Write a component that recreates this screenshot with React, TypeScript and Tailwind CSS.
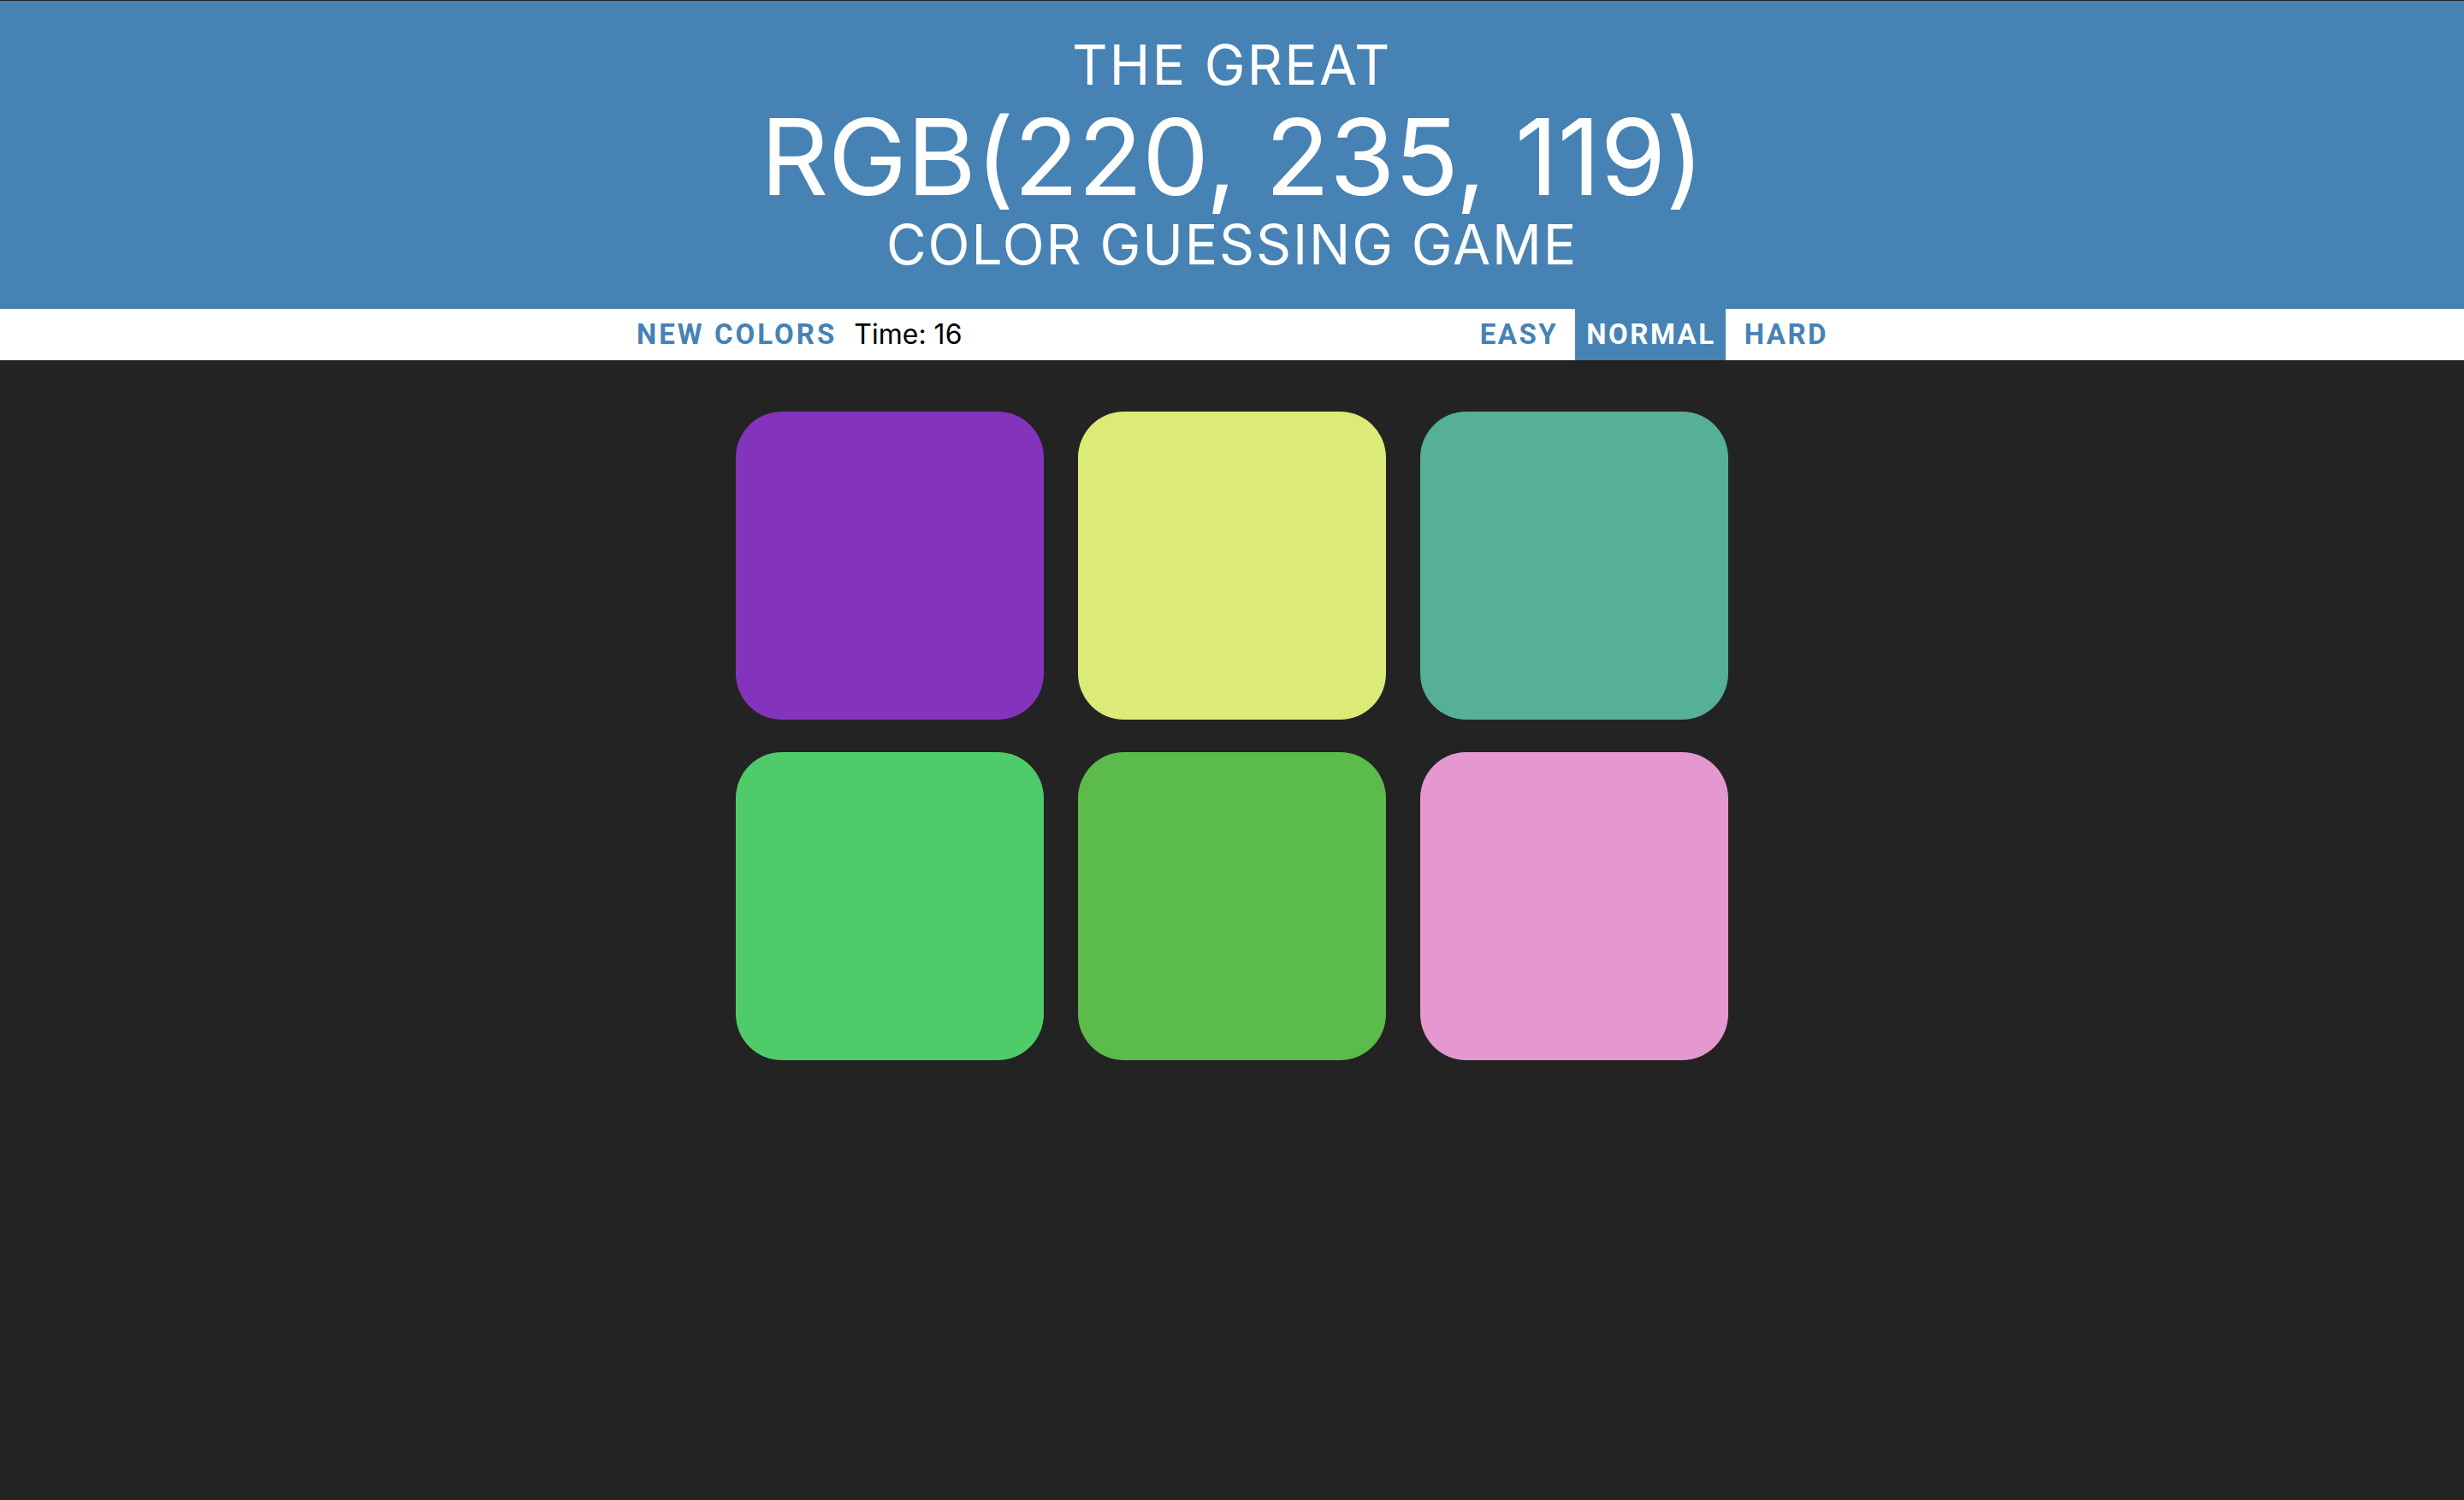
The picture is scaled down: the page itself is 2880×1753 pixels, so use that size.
import React from "react";

const colors = [
  "#8434bc",
  "#dceb77",
  "#55b095",
  "#4fcc69",
  "#5bbb4b",
  "#e498cf",
];

export default function App() {
  return (
    <div className="min-h-[1753px] bg-[#232323] border-t border-[#232323]">
      <h1 className="bg-[#4682b4] text-white text-center font-normal pt-[40px] pb-[45px] font-['Inter',sans-serif] uppercase">
        <span className="block text-[64px] leading-[70px] tracking-[2.3px]">The Great</span>
        <span className="block text-[124px] leading-[144px] tracking-[-0.6px]">RGB(220, 235, 119)</span>
        <span className="block text-[64px] leading-[61px] tracking-[1.9px]">Color Guessing Game</span>
      </h1>
      <div className="bg-white h-[60px]">
        <div className="mx-auto w-[1416px] h-full flex items-stretch justify-between">
          <div className="flex items-center">
            <button className="px-[12px] h-full text-[33px] font-bold tracking-[3px] text-[#4682b4] font-['Roboto',sans-serif] uppercase">
              New Colors
            </button>
            <span className="ml-[8px] text-[32px] text-black font-['Inter',sans-serif]">Time: 16</span>
          </div>
          <div className="flex items-stretch gap-[9px]">
            <button className="pl-[13px] pr-[11px] h-full text-[33px] font-bold tracking-[2.5px] text-[#4682b4] font-['Roboto',sans-serif]">
              EASY
            </button>
            <button className="pl-[13px] pr-[11px] h-full text-[33px] font-bold tracking-[2.5px] text-white bg-[#4682b4] font-['Roboto',sans-serif]">
              NORMAL
            </button>
            <button className="pl-[13px] pr-[11px] h-full text-[33px] font-bold tracking-[2.5px] text-[#4682b4] font-['Roboto',sans-serif]">
              HARD
            </button>
          </div>
        </div>
      </div>
      <div className="mx-auto w-[1160px] pt-[60px] grid grid-cols-3 gap-x-[40px] gap-y-[38px]">
        {colors.map((c, i) => (
          <div key={i} className="w-[360px] h-[360px] rounded-[54px]" style={{ backgroundColor: c }} />
        ))}
      </div>
    </div>
  );
}
